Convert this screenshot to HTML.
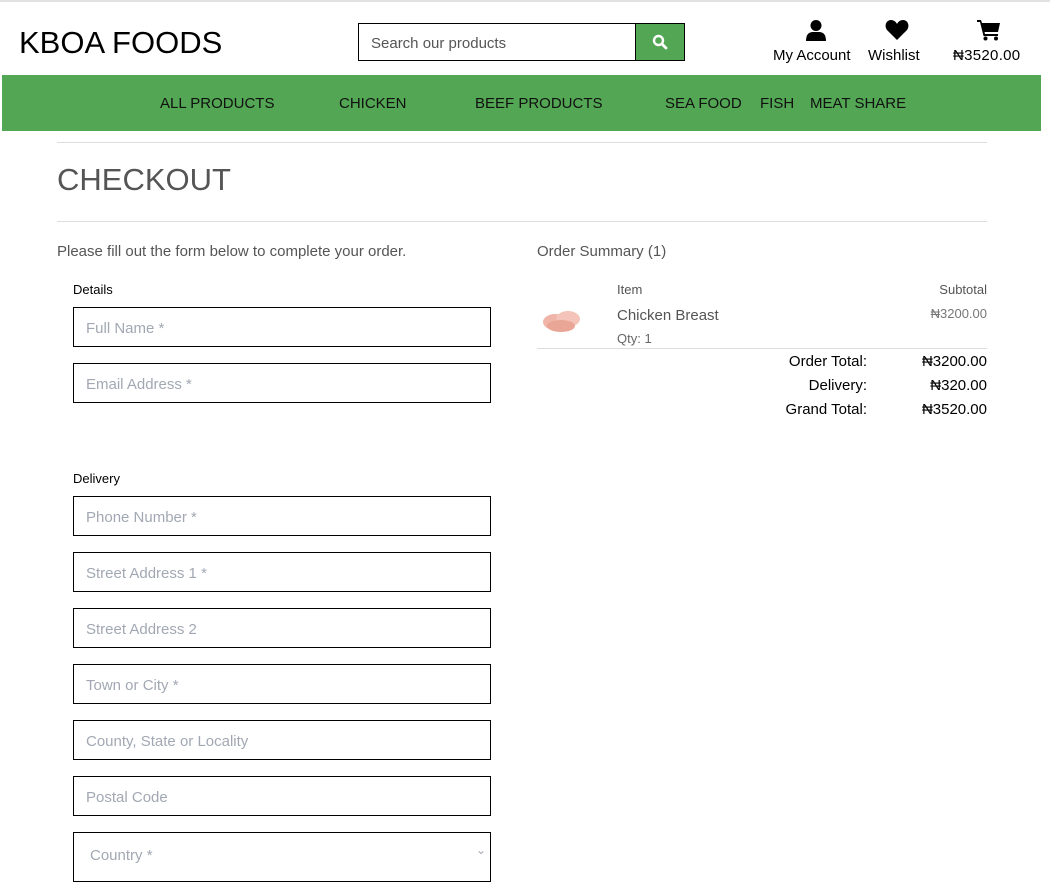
<!DOCTYPE html>
<html><head><meta charset="utf-8"><style>
*{box-sizing:border-box;margin:0;padding:0}
body{width:1050px;height:869px;overflow:hidden;background:#fff;font-family:"Liberation Sans",sans-serif;color:#000;position:relative}
.a{position:absolute;white-space:nowrap}
.inp{position:absolute;left:73px;width:418px;height:40px;border:1px solid #000;color:#a2a8b3;font-size:15px;padding:12px 12px 0}
.nav{position:absolute;top:75px;left:2px;width:1039px;height:56px;background:#53a653}
.nav span{position:absolute;top:20px;font-size:15px;color:#111}
</style></head><body>
<div class="a" style="top:0;left:0;width:1050px;height:2px;background:#e2e2e2"></div>
<div class="a" style="left:19px;top:25px;font-size:31px;color:#000">KBOA FOODS</div>
<div class="a" style="left:358px;top:23px;width:278px;height:38px;border:1px solid #000;padding:11px 12px 0;font-size:15px;color:#555">Search our products</div>
<div class="a" style="left:635px;top:23px;width:50px;height:38px;background:#53a653;border:1px solid #000">
<svg width="16" height="16" viewBox="0 0 16 16" style="position:absolute;left:16px;top:10px"><circle cx="6.5" cy="6.5" r="4.5" fill="none" stroke="#fff" stroke-width="2.4"/><path d="M10 10 L14 14" stroke="#fff" stroke-width="2.8" stroke-linecap="round"/></svg></div>
<svg class="a" style="left:805px;top:19px" width="22" height="22" viewBox="0 0 22 22"><circle cx="11" cy="6.5" r="5.5"/><path d="M1 22 Q1 13 8 13 H14 Q21 13 21 22 Z"/></svg>
<div class="a" style="left:773px;top:47px;font-size:15px">My Account</div>
<svg class="a" style="left:885px;top:20px" width="24" height="20" viewBox="0 0 24 20"><path d="M12 20 L2 10 C-1 6 1 0 6 0 C9 0 11 2 12 4 C13 2 15 0 18 0 C23 0 25 6 22 10 Z"/></svg>
<div class="a" style="left:868px;top:47px;font-size:15px">Wishlist</div>
<svg class="a" style="left:977px;top:19px" width="24" height="22" viewBox="0 0 24 22"><path d="M0 1 H4 L5 4 H23 L21 13 H7.5 L8 15 H21 V17 H6.5 L3 3 H0 Z"/><circle cx="8.5" cy="19.5" r="2"/><circle cx="19" cy="19.5" r="2"/></svg>
<div class="a" style="left:953px;top:47px;font-size:15px;letter-spacing:0.3px">₦3520.00</div>
<div class="nav">
<span style="left:158px">ALL PRODUCTS</span><span style="left:337px">CHICKEN</span><span style="left:473px">BEEF PRODUCTS</span><span style="left:663px">SEA FOOD</span><span style="left:758px">FISH</span><span style="left:808px">MEAT SHARE</span></div>
<div class="a" style="left:57px;top:142px;width:930px;height:1px;background:#ddd"></div>
<div class="a" style="left:57px;top:162px;font-size:31px;color:#555">CHECKOUT</div>
<div class="a" style="left:57px;top:221px;width:930px;height:1px;background:#ddd"></div>
<div class="a" style="left:57px;top:243px;font-size:15px;color:#555">Please fill out the form below to complete your order.</div>
<div class="a" style="left:73px;top:282px;font-size:13px">Details</div>
<div class="inp" style="top:307px">Full Name *</div>
<div class="inp" style="top:363px">Email Address *</div>
<div class="a" style="left:73px;top:471px;font-size:13px">Delivery</div>
<div class="inp" style="top:496px">Phone Number *</div>
<div class="inp" style="top:552px">Street Address 1 *</div>
<div class="inp" style="top:608px">Street Address 2</div>
<div class="inp" style="top:664px">Town or City *</div>
<div class="inp" style="top:720px">County, State or Locality</div>
<div class="inp" style="top:776px">Postal Code</div>
<div class="inp" style="top:832px;height:50px;padding:14px 16px 0">Country *<span style="position:absolute;right:4px;top:10px;font-size:12px">&#8964;</span></div>
<div class="a" style="left:537px;top:243px;font-size:15px;color:#555">Order Summary (1)</div>
<div class="a" style="left:617px;top:282px;font-size:13px;color:#555">Item</div>
<div class="a" style="right:63px;top:282px;font-size:13px;color:#555">Subtotal</div>
<svg class="a" style="left:541px;top:305px" width="42" height="30" viewBox="0 0 42 30"><ellipse cx="14" cy="17" rx="12" ry="8" fill="#f0b5a8"/><ellipse cx="27" cy="14" rx="12" ry="8" fill="#f4c4b8"/><ellipse cx="20" cy="21" rx="14" ry="6" fill="#e9a596"/></svg>
<div class="a" style="left:617px;top:307px;font-size:15px;color:#555">Chicken Breast</div>
<div class="a" style="left:617px;top:331px;font-size:13px;color:#666">Qty: 1</div>
<div class="a" style="right:63px;top:306px;font-size:13px;color:#777">₦3200.00</div>
<div class="a" style="left:537px;top:348px;width:450px;height:1px;background:#ddd"></div>
<div class="a" style="right:183px;top:353px;font-size:15px">Order Total:</div>
<div class="a" style="right:63px;top:353px;font-size:15px">₦3200.00</div>
<div class="a" style="right:183px;top:377px;font-size:15px">Delivery:</div>
<div class="a" style="right:63px;top:377px;font-size:15px">₦320.00</div>
<div class="a" style="right:183px;top:401px;font-size:15px">Grand Total:</div>
<div class="a" style="right:63px;top:401px;font-size:15px">₦3520.00</div>
</body></html>
